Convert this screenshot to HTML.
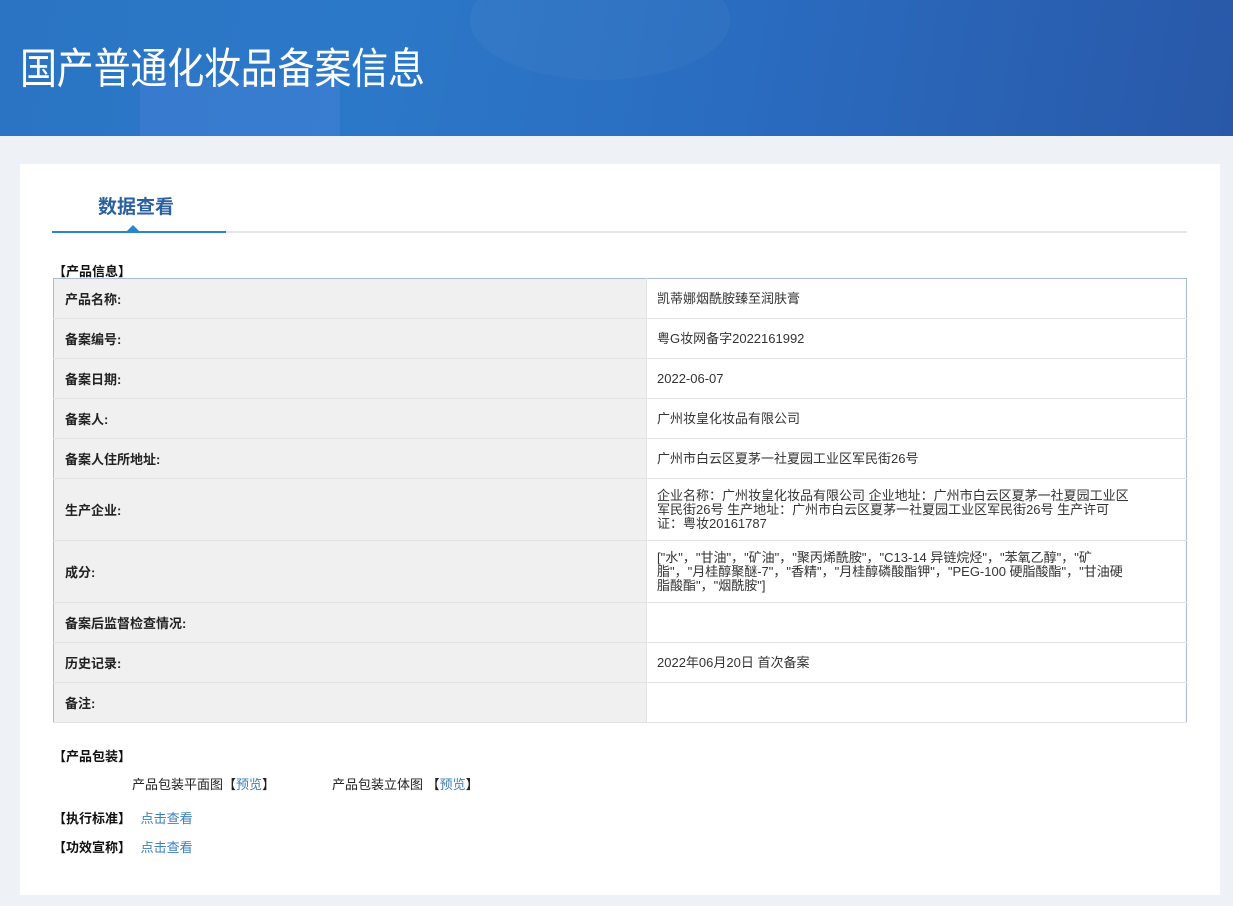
<!DOCTYPE html>
<html><head><meta charset="utf-8"><style>
*{margin:0;padding:0;box-sizing:border-box}
body{width:1233px;height:906px;background:#eef2f6;font-family:"Liberation Sans","Microsoft YaHei","Noto Sans CJK SC",sans-serif;font-size:13px;color:#333;overflow:hidden;position:relative}
.hd{position:absolute;left:0;top:0;width:1233px;height:136px;background:linear-gradient(100deg,#2b74c4 0%,#2c78c8 30%,#2a6cc0 60%,#2958a8 100%);overflow:hidden}
.hd .g1{position:absolute;left:140px;top:80px;width:200px;height:60px;background:rgba(90,140,230,.25)}
.hd .g2{position:absolute;left:470px;top:-40px;width:260px;height:120px;border-radius:50%;background:rgba(255,255,255,.03)}
.hd h1{position:absolute;left:20px;top:40px;color:#fff;font-weight:normal;font-size:37px;font-family:"Noto Sans CJK SC",sans-serif;transform:scaleY(1.15);transform-origin:left top;line-height:44px;letter-spacing:-0.2px}
.panel{position:absolute;left:20px;top:164px;width:1200px;height:731px;background:#fff}
.tab{position:absolute;left:78px;top:28px;font-size:19px;font-weight:bold;color:#2a5fa0}
.tl{position:absolute;left:32px;top:67px;width:1135px;height:2px;background:#e3e6ea}
.tlb{position:absolute;left:32px;top:67px;width:174px;height:2px;background:#2a86cc}
.tri{position:absolute;left:107px;top:61px;width:0;height:0;border-left:6px solid transparent;border-right:6px solid transparent;border-bottom:6px solid #2a86cc}
.sec{position:absolute;font-weight:bold;color:#111;font-size:13px}
table{position:absolute;left:33px;top:114px;width:1134px;border-collapse:collapse;border:1px solid #a9bdd8}
td{border-bottom:1px solid #e2e2e2;font-size:13px;vertical-align:middle}
td.l{width:593px;background:#f0f0f0;font-weight:bold;padding-left:11px;color:#222}
td.v{padding:0 46px 0 10px;color:#333;line-height:14px;border-left:1px solid #e2e2e2}
a{color:#3a7fbf;text-decoration:none}
.t{position:absolute;font-size:13px;color:#222}
</style></head><body>
<div class="hd"><div class="g1"></div><div class="g2"></div><h1>国产普通化妆品备案信息</h1></div>
<div class="panel">
<div class="tab">数据查看</div>
<div class="tl"></div><div class="tlb"></div><div class="tri"></div>
<div class="sec" style="left:33px;top:97px">【产品信息】</div>
<table>
<tr style="height:40px"><td class="l">产品名称:</td><td class="v">凯蒂娜烟酰胺臻至润肤膏</td></tr>
<tr style="height:40px"><td class="l">备案编号:</td><td class="v">粤G妆网备字2022161992</td></tr>
<tr style="height:40px"><td class="l">备案日期:</td><td class="v">2022-06-07</td></tr>
<tr style="height:40px"><td class="l">备案人:</td><td class="v">广州妆皇化妆品有限公司</td></tr>
<tr style="height:40px"><td class="l">备案人住所地址:</td><td class="v">广州市白云区夏茅一社夏园工业区军民街26号</td></tr>
<tr style="height:62px"><td class="l">生产企业:</td><td class="v">企业名称：广州妆皇化妆品有限公司 企业地址：广州市白云区夏茅一社夏园工业区<br>军民街26号 生产地址：广州市白云区夏茅一社夏园工业区军民街26号 生产许可<br>证：粤妆20161787</td></tr>
<tr style="height:62px"><td class="l">成分:</td><td class="v">["水"，"甘油"，"矿油"，"聚丙烯酰胺"，"C13-14 异链烷烃"，"苯氧乙醇"，"矿<br>脂"，"月桂醇聚醚-7"，"香精"，"月桂醇磷酸酯钾"，"PEG-100 硬脂酸酯"，"甘油硬<br>脂酸酯"，"烟酰胺"]</td></tr>
<tr style="height:40px"><td class="l">备案后监督检查情况:</td><td class="v"></td></tr>
<tr style="height:40px"><td class="l">历史记录:</td><td class="v">2022年06月20日 首次备案</td></tr>
<tr style="height:40px"><td class="l">备注:</td><td class="v"></td></tr>
</table>
<div class="sec" style="left:33px;top:582px">【产品包装】</div>
<div class="t" style="left:112px;top:610px">产品包装平面图【<a>预览</a>】</div>
<div class="t" style="left:312px;top:610px">产品包装立体图 【<a>预览</a>】</div>
<div class="sec" style="left:33px;top:644px">【执行标准】 <a style="font-weight:normal;margin-left:6px">点击查看</a></div>
<div class="sec" style="left:33px;top:673px">【功效宣称】 <a style="font-weight:normal;margin-left:6px">点击查看</a></div>
</div>
</body></html>
